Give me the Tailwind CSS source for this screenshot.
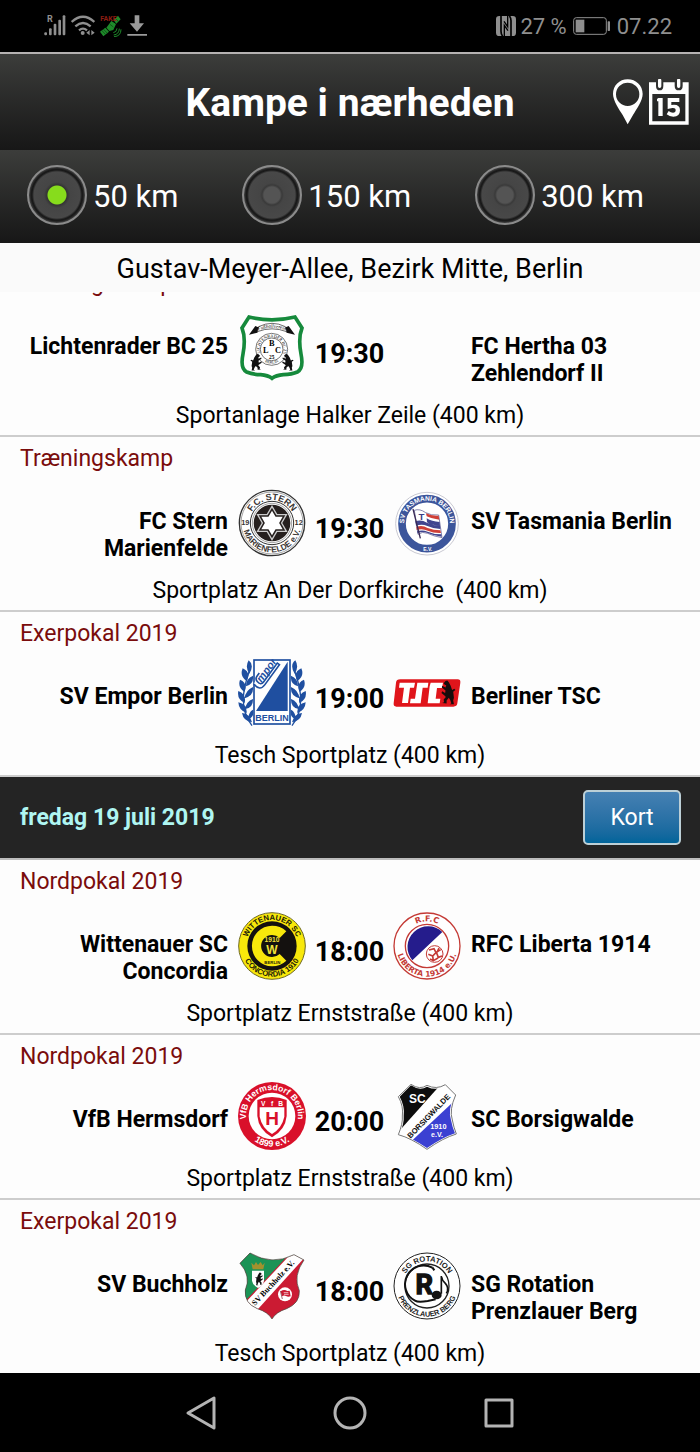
<!DOCTYPE html>
<html lang="da">
<head>
<meta charset="utf-8">
<meta name="viewport" content="width=device-width, initial-scale=1">
<title>Kampe i nærheden</title>
<script src="https://cdn.jsdelivr.net/npm/@tailwindcss/browser@4"></script>
</head>
<body class="flex min-h-screen flex-col bg-[#fdfdfd] font-['Roboto','Liberation_Sans',sans-serif] text-[23px] leading-[27px] text-black">

<!-- Circular baselines shared by the crests: "t" runs clockwise over the top, "b" runs under the bottom -->
<svg class="absolute h-0 w-0" aria-hidden="true">
  <defs>
    <path id="t69" d="M0 69A69 69 0 0 1 0 -69A69 69 0 0 1 0 69"/>
    <path id="t74" d="M0 74A74 74 0 0 1 0 -74A74 74 0 0 1 0 74"/>
    <path id="t78" d="M0 78A78 78 0 0 1 0 -78A78 78 0 0 1 0 78"/>
    <path id="t36" d="M0 36A36 36 0 0 1 0 -36A36 36 0 0 1 0 36"/>
    <path id="b43" d="M0 -43A43 43 0 0 0 0 43A43 43 0 0 0 0 -43"/>
    <path id="b88" d="M0 -88A88 88 0 0 0 0 88A88 88 0 0 0 0 -88"/>
    <path id="b92" d="M0 -92A92 92 0 0 0 0 92A92 92 0 0 0 0 -92"/>
    <path id="bear" d="M6 -24L10 -28L15 -27L20 -22L17 -18L13 -17L15 -12L24 -16L25 -12L15 -5L16 1L24 -3L26 1L17 7L14 10L20 16L19 22L24 24L12 25L12 18L6 12L2 17L-1 25L4 27L-8 27L-6 18L-8 12L-6 -2L-12 -6L-9 -9L-3 -6L1 -16Z"/>
    <path id="star" d="M0 -50L14.4 -25L43.3 -25L28.9 0L43.3 25L14.4 25L0 50L-14.4 25L-43.3 25L-28.9 0L-43.3 -25L-14.4 -25Z"/>
    <g id="laurel">
      <path d="M-60 98Q-88 62 -86 12Q-84 -20 -68 -66" fill="none" stroke="#1f4fa0" stroke-width="4"/>
      <path d="M-70 -98Q-52 -84 -68 -58Q-82 -78 -70 -98ZM-88 -74Q-62 -62 -76 -36Q-98 -50 -88 -74ZM-96 -40Q-72 -30 -82 -4Q-104 -16 -96 -40ZM-101 -6Q-76 4 -82 30Q-106 18 -101 -6ZM-101 28Q-74 34 -76 60Q-100 52 -101 28ZM-90 60Q-66 62 -60 88Q-86 84 -90 60ZM-57 -52Q-54 -26 -78 -20Q-78 -44 -57 -52ZM-57 -18Q-54 8 -82 16Q-80 -8 -57 -18ZM-57 18Q-56 44 -80 48Q-78 26 -57 18ZM-57 50Q-52 70 -70 78Q-72 58 -57 50Z" fill="#1f4fa0"/>
    </g>
  </defs>
</svg>

<!-- Status bar -->
<div class="flex h-[52px] items-center justify-between bg-black pr-7 pl-11 text-[22px] text-[#8f8f8f]">
  <div class="flex items-center gap-[5px]">
    <svg class="h-[22px] w-[22px]" viewBox="0 0 66 66" fill="#8f8f8f" role="img" aria-label="Signal">
      <rect x="1" y="52" width="8" height="9" rx="3"/><rect x="15" y="40" width="8" height="21" rx="3"/><rect x="29" y="26" width="8" height="35" rx="3"/><rect x="43" y="14" width="8" height="47" rx="3"/><rect x="56" y="1" width="8" height="60" rx="3"/>
      <text x="9" y="22" font-size="27" font-weight="700" font-family="Roboto">R</text>
    </svg>
    <svg class="h-[22px] w-6" viewBox="0 0 72 66" fill="none" stroke="#8f8f8f" stroke-width="7" role="img" aria-label="Wi-Fi">
      <path d="M2 21Q36 -10 70 21M13 34Q36 14 59 34M24 46Q36 36 48 46"/>
      <circle cx="35" cy="54" r="6" fill="#8f8f8f" stroke="none"/>
      <path d="M56 45V61L46 53ZM61 45V61L71 53Z" fill="#8f8f8f" stroke="none"/>
    </svg>
    <svg class="h-[22px] w-[22px]" viewBox="0 0 66 66" role="img" aria-label="Fake GPS">
      <path d="M0 50L16 38L27 50L10 64ZM19 38L34 18L48 27L40 45L28 48ZM41 16L54 2L62 13L49 26Z" fill="#1e8a2a"/>
      <path d="M5 46L17 59M10 42L22 55M47 10L55 20M30 28L40 36" stroke="#0a3c10" stroke-width="2"/>
      <path d="M40 53Q50 52 51 40M41 60Q57 58 58 41M42 65Q63 64 63 43" fill="none" stroke="#1e8a2a" stroke-width="3"/>
      <text x="1" y="19" font-size="21" font-weight="700" font-family="Roboto" fill="#8c1d12">FAKE</text>
    </svg>
    <svg class="h-[22px] w-5" viewBox="0 0 60 66" fill="#9a9a9a" role="img" aria-label="Download">
      <path d="M23 1H37V25H51L30 50L8 25H23ZM1 57H60V62H1Z"/>
    </svg>
  </div>
  <div class="flex items-center">
    <svg class="mr-1 h-5 w-5" viewBox="0 0 60 60" role="img" aria-label="NFC">
      <rect width="60" height="60" rx="10" fill="#8f8f8f"/>
      <path d="M15 0V46Q15 55 20 60M45 60V14Q45 5 40 0" fill="none" stroke="#000" stroke-width="5"/>
      <path d="M25 60V28L36 44M35 0V32L24 16" fill="none" stroke="#000" stroke-width="4"/>
    </svg>
    <span>27 %</span>
    <svg class="mx-[6px] h-[18px] w-[38px]" viewBox="0 0 114 54" role="img" aria-label="Batteri">
      <rect x="2" y="2" width="98" height="50" rx="8" fill="none" stroke="#8f8f8f" stroke-width="3"/>
      <rect x="8" y="8" width="26" height="38" fill="#8f8f8f"/>
      <rect x="104" y="13" width="7" height="29" rx="2" fill="#8f8f8f"/>
    </svg>
    <span>07.22</span>
  </div>
</div>

<!-- Title bar -->
<header class="grid h-[98px] grid-cols-[1fr_auto_1fr] items-center border-t-2 border-[#b5b2b2] bg-linear-to-b from-[#3c3d3b] to-[#171717] px-[10px] text-white">
  <h1 class="col-start-2 pt-px text-[39px] leading-[44px] font-bold">Kampe i nærheden</h1>
  <div class="flex items-center justify-end gap-1">
    <button type="button" aria-label="Steder" class="h-[46px] w-8">
      <svg class="h-full w-full" viewBox="0 0 96 138" fill="#fff">
        <path fill-rule="evenodd" d="M47 1C22 1 3 20 3 45C3 65 22 92 32 108L47 136L63 108C74 90 92 65 92 45C92 20 72 1 47 1ZM47 11A35 35 0 1 1 47 81A35 35 0 1 1 47 11Z"/>
      </svg>
    </button>
    <button type="button" aria-label="Kalender" class="h-[46px] w-[42px]">
      <svg class="h-full w-full" viewBox="0 0 126 138">
        <path fill="#fff" fill-rule="evenodd" d="M3 10H24V20Q24 34 35 34Q46 34 46 20V10H80V20Q80 34 92 34Q104 34 104 20V10H122V137H3ZM13 45V127H112V45Z"/>
        <path d="M35 4V22M92 4V22" stroke="#fff" stroke-width="10" stroke-linecap="round"/>
        <path d="M31 57H44V111H31V67H27V60ZM59 57H94V69H70V78Q96 74 96 94Q96 113 76 113Q64 113 56 106L62 96Q68 101 75 101Q83 101 83 94Q83 86 73 87L59 90Z" fill="#fff"/>
      </svg>
    </button>
  </div>
</header>

<!-- Search radius -->
<div role="radiogroup" aria-label="Afstand" class="flex h-[93px] items-center justify-between bg-linear-to-b from-[#3c3d3b] to-[#171717] pr-14 pl-[27px] text-[31px] leading-9 text-white">
  <label class="flex items-center gap-[6px]"><input type="radio" name="km" checked class="mb-1 size-[60px] shrink-0 appearance-none rounded-full border-2 border-[#8b8b8b] bg-[radial-gradient(circle,#4a4a4a_0_9px,#565656_10px,#454545_11px,#484848_23px,#181818_25px,#1c1c1c_26px,#444_28px)] checked:bg-[radial-gradient(circle,#87dc1c_0_9px,#343434_10px,#454545_13px,#484848_23px,#181818_25px,#1c1c1c_26px,#444_28px)]"><span class="pt-px">50 km</span></label>
  <label class="flex items-center gap-[6px]"><input type="radio" name="km" class="mb-1 size-[60px] shrink-0 appearance-none rounded-full border-2 border-[#8b8b8b] bg-[radial-gradient(circle,#545454_0_8px,#3a3a3a_10px,#454545_12px,#484848_23px,#181818_25px,#1c1c1c_26px,#444_28px)] checked:bg-[radial-gradient(circle,#87dc1c_0_9px,#343434_10px,#454545_13px,#484848_23px,#181818_25px,#1c1c1c_26px,#444_28px)]"><span class="pt-px">150 km</span></label>
  <label class="flex items-center gap-[6px]"><input type="radio" name="km" class="mb-1 size-[60px] shrink-0 appearance-none rounded-full border-2 border-[#8b8b8b] bg-[radial-gradient(circle,#545454_0_8px,#3a3a3a_10px,#454545_12px,#484848_23px,#181818_25px,#1c1c1c_26px,#444_28px)] checked:bg-[radial-gradient(circle,#87dc1c_0_9px,#343434_10px,#454545_13px,#484848_23px,#181818_25px,#1c1c1c_26px,#444_28px)]"><span class="pt-px">300 km</span></label>
</div>

<p class="relative z-10 bg-[#fafafa] pt-[10px] pb-[7px] text-center text-[27px] leading-8">Gustav-Meyer-Allee, Bezirk Mitte, Berlin</p>

<!-- Match list, scrolled slightly under the address line -->
<main class="-mt-[30px] flex-1">
  <article class="border-b-2 border-[#cdcdcd] pt-2 pb-[5px]">
    <h2 class="px-5 text-[#7a0c0c]">Træningskamp</h2>
    <div class="mt-3 mb-[15px] grid grid-cols-[minmax(0,228fr)_68px_67px_68px_minmax(0,229fr)] items-center gap-x-[10px]">
      <p class="self-start pt-6 pl-5 text-right font-bold">Lichtenrader BC 25</p>
      <svg class="size-[68px]" viewBox="-102 -102 204 204" role="img" aria-label="Lichtenrader BC 25">
        <path d="M-69 -93Q0 -76 69 -93L90 -60Q78 -30 87 18Q96 62 76 72Q60 79 34 80Q12 82 0 91Q-12 82 -34 80Q-60 79 -76 72Q-96 62 -87 18Q-78 -30 -90 -60Z" fill="#fff" stroke="#168a3c" stroke-width="11"/>
        <path d="M-69 -40L-50 -66L-36 -60L-44 -46ZM69 -40L50 -66L36 -60L44 -46Z" fill="#111"/>
        <path d="M-44 -49Q0 -66 44 -49L40 -64Q0 -84 -40 -64Z" fill="#fff" stroke="#222" stroke-width="2"/>
        <path id="banner" d="M-40 -53Q0 -69 40 -53" fill="none"/>
        <text font-family="Liberation Serif" font-size="15" font-style="italic" text-anchor="middle"><textPath href="#banner" startOffset="50%">Fußballverein</textPath></text>
        <g transform="translate(-1 4)">
          <circle r="48" fill="#fff" stroke="#333" stroke-width="2"/><circle r="34" fill="none" stroke="#333" stroke-width="2"/>
          <text font-family="Liberation Serif" font-size="13" text-anchor="middle"><textPath href="#t36" startOffset="50%">LICHTENRADER BC 25</textPath></text>
          <text font-family="Liberation Serif" font-size="12" text-anchor="middle"><textPath href="#b43" startOffset="50%">BERLIN</textPath></text>
          <g font-family="Liberation Serif" font-weight="700" text-anchor="middle" font-size="25"><text y="-9">B</text><text x="-18" y="10">L</text><text x="19" y="10">C</text><text y="28" font-size="16">25</text></g>
        </g>
        <use href="#bear" transform="translate(-54 43) scale(.9)" fill="#111"/>
        <use href="#bear" transform="translate(54 43) scale(-.9 .9)" fill="#111"/>
      </svg>
      <p class="flex justify-center pt-3 text-[27px] leading-8 font-bold"><time>19:30</time></p>
      <span></span>
      <p class="self-start pt-6 pr-5 font-bold">FC Hertha 03 Zehlendorf II</p>
    </div>
    <p class="text-center leading-7">Sportanlage Halker Zeile (400 km)</p>
  </article>

  <article class="border-b-2 border-[#cdcdcd] pt-2 pb-[5px]">
    <h2 class="px-5 text-[#7a0c0c]">Træningskamp</h2>
    <div class="mt-3 mb-[15px] grid grid-cols-[minmax(0,228fr)_68px_67px_68px_minmax(0,229fr)] items-center gap-x-[10px]">
      <p class="self-start pt-6 pl-5 text-right font-bold">FC Stern Marienfelde</p>
      <svg class="size-[68px]" viewBox="-102 -102 204 204" role="img" aria-label="FC Stern Marienfelde">
        <circle r="98" fill="#fff" stroke="#333" stroke-width="4"/><circle r="93" fill="none" stroke="#777" stroke-width="2"/>
        <circle r="65" fill="none" stroke="#333" stroke-width="3"/><circle r="59" fill="none" stroke="#777" stroke-width="2"/>
        <circle r="55" fill="#26201e"/>
        <use href="#star" fill="#26201e" stroke="#ccc" stroke-width="4"/><use href="#star" transform="scale(.74)" fill="#fff"/>
        <g font-family="Liberation Sans" font-weight="700" fill="#3b3634" text-anchor="middle">
          <text font-size="27"><textPath href="#t69" startOffset="50%">F.C. STERN</textPath></text>
          <text font-size="25"><textPath href="#b88" startOffset="50%">MARIENFELDE e.V.</textPath></text>
          <text x="-80" y="7" font-size="22">19</text><text x="80" y="7" font-size="22">12</text>
        </g>
      </svg>
      <p class="flex justify-center pt-3 text-[27px] leading-8 font-bold"><time>19:30</time></p>
      <svg class="size-[68px]" viewBox="-102 -102 204 204" role="img" aria-label="SV Tasmania Berlin">
        <circle r="94" cy="2" fill="#fff" stroke="#c9c9d2" stroke-width="3"/>
        <circle r="75" cy="2" fill="#fff" stroke="#3c559b" stroke-width="23"/>
        <g font-family="Liberation Sans" font-weight="700" fill="#fff" text-anchor="middle">
          <text font-size="20" transform="translate(0 2)"><textPath href="#t69" startOffset="50%">SV TASMANIA BERLIN</textPath></text><text x="2" y="83" font-size="15">E.V.</text>
        </g>
        <path d="M-38 -38Q-22 -44 -4 -31Q12 -22 35 -24L45 44Q20 40 2 31Q-14 24 -27 34Z" fill="#fff" stroke="#4b4b86" stroke-width="2"/>
        <path d="M-3 -29Q14 -20 35 -22L37 -10Q14 -12 -1 -20ZM-32 12Q-15 5 2 15Q20 22 40 22L42 30Q20 31 2 23Q-14 15 -31 21Z" fill="#cf4038"/>
        <path d="M-1 -14Q14 -4 38 -3L39 8Q15 8 0 -2ZM-35 -5Q-18 -12 0 -1Q18 8 39 8L40 18Q18 17 1 9Q-15 2 -33 8ZM-30 25Q-14 19 2 26Q20 34 43 34L44 41Q20 38 2 30Q-14 24 -28 31Z" fill="#41458f"/>
        <path d="M-42 -42L-20 46" stroke="#3a2a55" stroke-width="4"/>
        <text x="-17" y="-8" font-family="Liberation Sans" font-weight="700" font-size="29" text-anchor="middle" fill="#3a3f86">T</text>
      </svg>
      <p class="self-start pt-6 pr-5 font-bold">SV Tasmania Berlin</p>
    </div>
    <p class="text-center leading-7 whitespace-pre">Sportplatz An Der Dorfkirche  (400 km)</p>
  </article>

  <article class="border-b-2 border-[#cdcdcd] pt-2 pb-[5px]">
    <h2 class="px-5 text-[#7a0c0c]">Exerpokal 2019</h2>
    <div class="mt-3 mb-[15px] grid grid-cols-[minmax(0,228fr)_68px_67px_68px_minmax(0,229fr)] items-center gap-x-[10px]">
      <p class="self-start pt-6 pl-5 text-right font-bold">SV Empor Berlin</p>
      <svg class="size-[68px]" viewBox="-102 -102 204 204" role="img" aria-label="SV Empor Berlin">
        <use href="#laurel"/><use href="#laurel" transform="scale(-1 1)"/>
        <rect x="-54" y="-99" width="108" height="192" fill="#fff" stroke="#1f4fa0" stroke-width="5"/>
        <path d="M47 -94V54H-48Z" fill="#1f4fa0"/>
        <g transform="rotate(-54 -18 -50)">
          <path d="M-58 -66Q-66 -38 -40 -38H34V-46H-36Q-50 -46 -46 -62Q-44 -72 -34 -72H-22" fill="#fff" stroke="#1f4fa0" stroke-width="5"/>
          <text x="-2" y="-49" text-anchor="middle" font-family="Liberation Sans" font-size="32" font-weight="700" font-style="italic" fill="#1f4fa0">mpor</text>
        </g>
        <text y="83" text-anchor="middle" font-family="Liberation Sans" font-size="27" font-weight="700" fill="#1f4fa0">BERLIN</text>
      </svg>
      <p class="flex justify-center pt-3 text-[27px] leading-8 font-bold"><time>19:00</time></p>
      <svg class="size-[68px]" viewBox="-102 -102 204 204" role="img" aria-label="Berliner TSC">
        <path d="M-80 -41H92Q101 -41 100 -31L91 31Q90 41 79 41H-92Q-101 41 -100 31L-93 -31Q-92 -41 -80 -41Z" fill="#e0151b"/>
        <path d="M-82 -31H-36L-39 -16H-51L-57 30H-75L-69 -16H-84Z" fill="#fff"/>
        <path d="M-29 -31H4L2 -16H-13L-19 31H-51L-49 17H-36Z" fill="#fff"/>
        <path d="M11 -31H48L45 -15H30L26 17H40L38 31H2L8 -20Z" fill="#fff"/>
        <use href="#bear" transform="translate(72 -1) scale(-1.1 1.3)" fill="#160c0c"/>
      </svg>
      <p class="self-start pt-6 pr-5 font-bold">Berliner TSC</p>
    </div>
    <p class="text-center leading-7">Tesch Sportplatz (400 km)</p>
  </article>

  <section class="flex h-[83px] items-center justify-between border-b-2 border-[#bdbdbd] bg-[#242424] pr-[19px] pl-5">
    <h2 class="font-bold text-[#aff6f2]">fredag 19 juli 2019</h2>
    <button type="button" class="h-[55px] w-[98px] rounded-[5px] border-2 border-[#bccfd6] bg-linear-to-b from-[#4580b3] to-[#00649a] text-white">Kort</button>
  </section>

  <article class="border-b-2 border-[#cdcdcd] pt-2 pb-[5px]">
    <h2 class="px-5 text-[#7a0c0c]">Nordpokal 2019</h2>
    <div class="mt-3 mb-[15px] grid grid-cols-[minmax(0,228fr)_68px_67px_68px_minmax(0,229fr)] items-center gap-x-[10px]">
      <p class="self-start pt-6 pl-5 text-right font-bold">Wittenauer SC Concordia</p>
      <svg class="size-[68px]" viewBox="-102 -102 204 204" role="img" aria-label="Wittenauer SC Concordia">
        <circle r="100" fill="#f8e80b" stroke="#6d6823" stroke-width="3"/>
        <circle r="74" fill="#14110f"/>
        <path d="M43 -44A61 61 0 1 0 43 44L23 24A33 33 0 1 1 23 -24Z" fill="#f8e80b"/>
        <g font-family="Liberation Sans" font-weight="700" text-anchor="middle" fill="#222008" font-size="23">
          <text><textPath href="#t78" startOffset="50%">WITTENAUER SC</textPath></text>
          <text><textPath href="#b92" startOffset="50%">CONCORDIA 1910</textPath></text>
          <g fill="#f1e23a"><text y="-12" font-size="20">1910</text><text y="24" font-size="36">W</text><text x="1" y="54" font-size="13" fill="#222008">BERLIN</text></g>
        </g>
      </svg>
      <p class="flex justify-center pt-3 text-[27px] leading-8 font-bold"><time>18:00</time></p>
      <svg class="size-[68px]" viewBox="-102 -102 204 204" role="img" aria-label="RFC Liberta 1914">
        <circle r="99" fill="#fff" stroke="#c43a35" stroke-width="4"/>
        <circle r="65" fill="#fff" stroke="#c43a35" stroke-width="4"/>
        <path d="M-44 43A62 62 0 0 1 46 -42Z" fill="#251c8c"/>
        <g transform="translate(23 24)"><circle r="25" fill="#fff" stroke="#c43a35" stroke-width="3"/><path d="M-17 -12L-2 -16L4 -4L-6 6L-19 1M4 -4L18 -13M-6 6L-4 20M13 -18L6 -3L11 10L22 6M-14 15L-4 20L10 12" fill="none" stroke="#c43a35" stroke-width="5"/></g>
        <g font-family="DejaVu Sans" font-weight="700" text-anchor="middle" fill="#c43a35" font-size="24">
          <text><textPath href="#t74" startOffset="50%">R.F.C</textPath></text>
          <text font-size="23"><textPath href="#b92" startOffset="50%">LIBERTA 1914 e.U.</textPath></text>
        </g>
      </svg>
      <p class="self-start pt-6 pr-5 font-bold">RFC Liberta 1914</p>
    </div>
    <p class="text-center leading-7">Sportplatz Ernststraße (400 km)</p>
  </article>

  <article class="border-b-2 border-[#cdcdcd] pt-2 pb-[5px]">
    <h2 class="px-5 text-[#7a0c0c]">Nordpokal 2019</h2>
    <div class="mt-3 mb-[15px] grid grid-cols-[minmax(0,228fr)_68px_67px_68px_minmax(0,229fr)] items-center gap-x-[10px]">
      <p class="self-start pt-6 pl-5 text-right font-bold">VfB Hermsdorf</p>
      <svg class="size-[68px]" viewBox="-102 -102 204 204" role="img" aria-label="VfB Hermsdorf">
        <circle r="102" fill="#d9102a"/><circle r="70" fill="#fff"/>
        <path d="M-44 -48Q0 -66 44 -48V0Q40 42 0 64Q-40 42 -44 0Z" fill="#d9102a"/>
        <path d="M-37 -26H37V2Q30 36 0 54Q-30 36 -37 2Z" fill="#fff"/>
        <g font-family="Liberation Sans" font-weight="700" text-anchor="middle" fill="#fff">
          <text font-size="26"><textPath href="#t78" startOffset="50%">VfB Hermsdorf Berlin</textPath></text>
          <text font-size="27"><textPath href="#b92" startOffset="50%">1899 e.V.</textPath></text>
          <text x="-26" y="-31" font-size="20">V</text><text y="-31" font-size="20">f</text><text x="26" y="-31" font-size="20">B</text>
          <text y="26" font-size="57" fill="#d9102a">H</text>
        </g>
      </svg>
      <p class="flex justify-center pt-3 text-[27px] leading-8 font-bold"><time>20:00</time></p>
      <svg class="size-[68px]" viewBox="-102 -102 204 204" role="img" aria-label="SC Borsigwalde">
        <clipPath id="sc-shield"><path d="M-48 -92Q-22 -74 0 -88Q28 -74 54 -90L82 -62Q62 -18 72 12Q76 34 84 52Q48 64 0 96Q-48 64 -82 54Q-68 22 -70 0Q-66 -30 -82 -58Z"/></clipPath>
        <path d="M-48 -95Q-22 -77 0 -92Q28 -78 55 -94L86 -63Q66 -18 76 12Q80 34 88 54Q48 66 0 100Q-48 66 -86 56Q-72 22 -74 0Q-70 -30 -86 -58Z" fill="#fff" stroke="#777" stroke-width="3"/>
        <g clip-path="url(#sc-shield)">
          <rect x="-102" y="-102" width="204" height="204" fill="#fff"/>
          <path d="M-102 -102H48L-102 66Z" fill="#0d0d0d"/>
          <path d="M102 -64V102H-42L-56 84Z" fill="#3b40d2"/>
        </g>
        <g font-family="Liberation Sans" font-weight="700" text-anchor="middle" fill="#fff">
          <text x="-29" y="-40" font-size="36">SC</text><text x="34" y="38" font-size="22">1910</text><text x="30" y="63" font-size="21">e.V.</text>
          <text transform="translate(11 6) rotate(-46)" font-size="23" fill="#111">BORSIGWALDE</text>
        </g>
      </svg>
      <p class="self-start pt-6 pr-5 font-bold">SC Borsigwalde</p>
    </div>
    <p class="text-center leading-7">Sportplatz Ernststraße (400 km)</p>
  </article>

  <article class="pt-2 pb-[5px]">
    <h2 class="px-5 text-[#7a0c0c]">Exerpokal 2019</h2>
    <div class="mt-3 mb-[15px] grid grid-cols-[minmax(0,228fr)_68px_67px_68px_minmax(0,229fr)] items-center gap-x-[10px]">
      <p class="self-start pt-6 pl-5 text-right font-bold">SV Buchholz</p>
      <svg class="size-[68px]" viewBox="-102 -102 204 204" role="img" aria-label="SV Buchholz">
        <clipPath id="sv-shield"><path d="M-66 -99Q0 -60 66 -94L96 -78Q62 -30 82 14Q84 52 44 68Q12 78 0 99Q-12 78 -44 68Q-84 52 -80 12Q-62 -30 -96 -68Z"/></clipPath>
        <g clip-path="url(#sv-shield)">
          <rect x="-102" y="-102" width="204" height="204" fill="#cb1b33"/>
          <path d="M-102 -102H58L-102 68Z" fill="#1c9356"/>
          <path d="M-86 56L64 -104L102 -90L-52 80Z" fill="#fff"/>
        </g>
        <path d="M-66 -99Q0 -60 66 -94L96 -78Q62 -30 82 14Q84 52 44 68Q12 78 0 99Q-12 78 -44 68Q-84 52 -80 12Q-62 -30 -96 -68Z" fill="none" stroke="#3f4a40" stroke-width="2"/>
        <path d="M-62 -70L-54 -62L-48 -72L-42 -63L-34 -72L-28 -62L-22 -70L-26 -50H-58Z" fill="#a4912d"/>
        <path d="M-60 -46H-24V-16Q-26 -2 -42 6Q-58 -2 -60 -16Z" fill="#fff"/>
        <use href="#bear" transform="translate(-43 -21) scale(.6 .7)" fill="#111"/>
        <circle cx="39" cy="25" r="21" fill="#fff"/>
        <path d="M26 16Q36 8 46 15L53 14L56 31Q48 34 42 30Q36 26 30 31Z" fill="#cb1b33"/><path d="M35 20H49M36 25H50" stroke="#fff" stroke-width="2"/><path d="M25 15L31 39" stroke="#7a2030" stroke-width="2"/>
        <text transform="translate(9 -4) rotate(-47)" text-anchor="middle" font-family="Liberation Serif" font-weight="700" font-size="24">SV Buchholz e.V.</text>
      </svg>
      <p class="flex justify-center pt-3 text-[27px] leading-8 font-bold"><time>18:00</time></p>
      <svg class="size-[68px]" viewBox="-102 -102 204 204" role="img" aria-label="SG Rotation Prenzlauer Berg">
        <circle r="99" fill="#fff" stroke="#222" stroke-width="3"/><circle r="66" fill="none" stroke="#222" stroke-width="4"/>
        <path d="M16 -55A54 54 0 0 0 -36 44Q-26 50 2 45L26 40" fill="none" stroke="#111" stroke-width="6"/>
        <path d="M16 -56L22 -47" stroke="#111" stroke-width="6"/>
        <path d="M43 23V-30Q44 -18 55 -8Q68 6 58 22" fill="none" stroke="#111" stroke-width="5"/>
        <ellipse cx="29" cy="27" rx="15" ry="13" fill="#111"/>
        <g font-family="Liberation Sans" font-weight="700" text-anchor="middle" fill="#222">
          <text font-size="23"><textPath href="#t74" startOffset="50%">SG ROTATION</textPath></text>
          <text font-size="22"><textPath href="#b92" startOffset="50%">PRENZLAUER BERG</textPath></text>
          <text x="-8" y="23" font-size="82" fill="#111" stroke="#111" stroke-width="4" font-family="Roboto">R</text>
        </g>
      </svg>
      <p class="self-start pt-6 pr-5 font-bold">SG Rotation Prenzlauer Berg</p>
    </div>
    <p class="text-center leading-7">Tesch Sportplatz (400 km)</p>
  </article>
</main>

<!-- System navigation -->
<nav class="flex h-[79px] items-center justify-center bg-black" aria-label="System">
  <button type="button" aria-label="Tilbage" class="flex h-full w-[149px] items-center justify-center"><svg class="size-9" viewBox="0 0 36 36" fill="none" stroke="#b4b4b4" stroke-width="3" stroke-linejoin="round"><path d="M31 3V33L5 18Z"/></svg></button>
  <button type="button" aria-label="Hjem" class="flex h-full w-[149px] items-center justify-center"><svg class="size-9" viewBox="0 0 36 36" fill="none" stroke="#b4b4b4" stroke-width="3"><circle cx="18" cy="18" r="15"/></svg></button>
  <button type="button" aria-label="Seneste" class="flex h-full w-[149px] items-center justify-center"><svg class="size-9" viewBox="0 0 36 36" fill="none" stroke="#b4b4b4" stroke-width="3" stroke-linejoin="round"><rect x="5" y="5" width="26" height="26"/></svg></button>
</nav>
</body>
</html>
